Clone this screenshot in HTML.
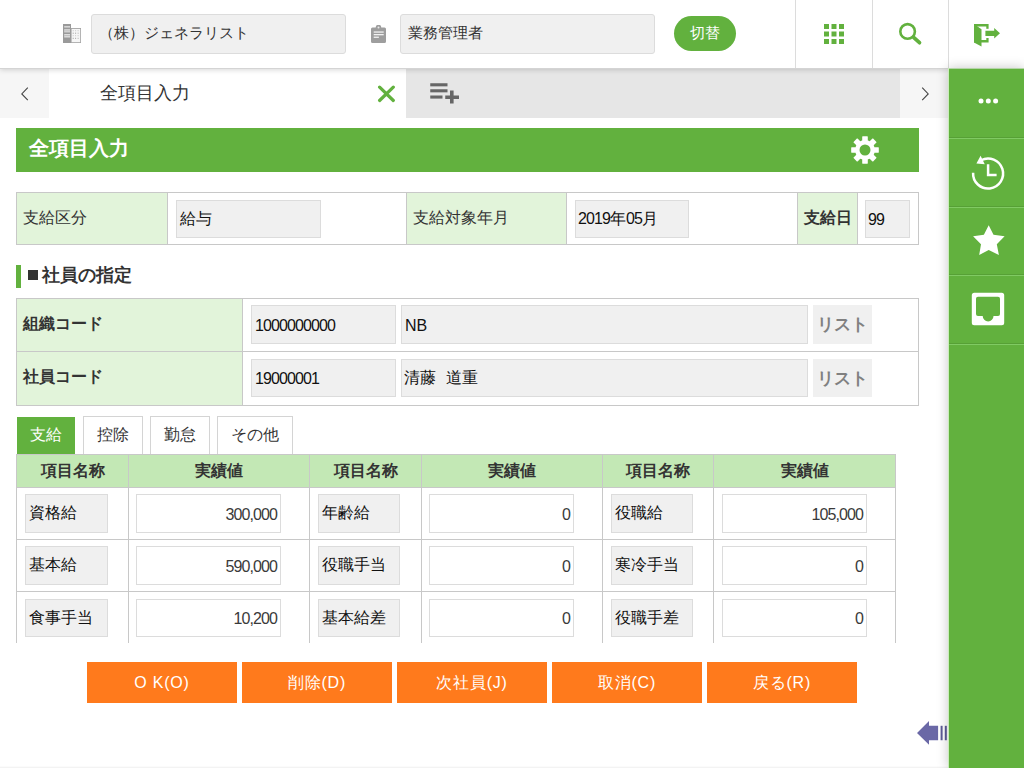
<!DOCTYPE html>
<html lang="ja">
<head>
<meta charset="utf-8">
<title>全項目入力</title>
<style>
*{box-sizing:border-box;margin:0;padding:0}
html,body{width:1024px;height:768px;overflow:hidden;background:#fff}
body{font-family:"Liberation Sans",sans-serif;color:#333;position:relative;font-size:15px}
.abs{position:absolute}
#hdr{position:absolute;left:0;top:0;width:1024px;height:69px;background:#fff;border-bottom:1px solid #d4d4d4;box-shadow:0 1px 5px rgba(0,0,0,.16);z-index:5}
.hin{position:absolute;top:14px;height:40px;border:1px solid #dcdcdc;border-radius:3px;background:#f0f0f0;font-size:15px;line-height:36px;padding-left:8px;color:#333;white-space:nowrap;overflow:hidden}
.vsep{position:absolute;top:0;width:1px;height:68px;background:#dcdcdc}
#pill{position:absolute;left:674px;top:16px;width:62px;height:35px;border-radius:17.5px;background:#62b13e;color:#fff;font-size:15px;line-height:34px;text-align:center}
#tabbar{position:absolute;left:0;top:68px;width:948px;height:50px;background:#e6e6e6}
#tabbar .la{position:absolute;left:0;top:0;width:49px;height:50px;background:#f6f6f6}
#tabbar .ra{position:absolute;left:900px;top:0;width:48px;height:50px;background:#f6f6f6}
#tabbar .act{position:absolute;left:49px;top:0;width:357px;height:50px;background:#fff;font-size:17.8px;line-height:51px;padding-left:51px;color:#333}
#side{position:absolute;left:948px;top:68px;width:76px;height:700px;background:#62b13e;border-left:1px solid #c9edba;box-shadow:0 0 11px rgba(0,0,0,.22);z-index:6}
#side::before{content:"";position:absolute;left:0;top:0;width:76px;height:1px;background:#b4d5a7}
#side .sd{position:absolute;left:0;width:76px;height:1px;background:#57a036}
#side .sl{position:absolute;left:0;width:76px;height:1px;background:#80ca63}
#ttl{position:absolute;left:16px;top:128px;width:903px;height:44px;background:#62b13e;color:#fff;font-weight:bold;font-size:20px;line-height:41px;padding-left:13px}
.box{position:absolute;border:1px solid #c8c8c8;background:#fff}
.lab{position:absolute;background:#e2f4da}
.vl{position:absolute;width:1px;background:#c8c8c8}
.hl{position:absolute;height:1px;background:#c8c8c8}
.ro{position:absolute;border:1px solid #dcdcdc;background:#f0f0f0;white-space:nowrap;overflow:hidden;color:#111;font-size:16px}
.wi{position:absolute;border:1px solid #dcdcdc;background:#fff;white-space:nowrap;overflow:hidden;text-align:right;color:#3a3a3a;font-size:16px}
.n{letter-spacing:-.9px}
.t{position:absolute;white-space:nowrap}
.b{font-weight:bold}
.btn{position:absolute;top:662px;width:150px;height:41px;background:#ff7a1c;color:#fff;font-size:16px;line-height:41px;text-align:center;letter-spacing:.8px}
.tab{position:absolute;top:416px;height:39px;border:1px solid #d4d4d4;border-bottom:none;background:#fff;font-size:16px;line-height:36px;text-align:center;color:#333}
.th{position:absolute;background:#c3e8b5;font-weight:bold;font-size:16px;line-height:32px;text-align:center;color:#333}
</style>
</head>
<body>
<div id="hdr">
  <svg class="abs" style="left:63px;top:24px" width="18" height="19" viewBox="0 0 18 19">
    <rect x="0" y="0" width="8" height="19" fill="#9a9a9a"/>
    <rect x="1.200" y="2" width="5.800" height="1.600" fill="#d6d6d6"/>
    <rect x="1.200" y="5.200" width="5.800" height="3.200" fill="#dedede"/><rect x="1.200" y="6.500" width="5.800" height=".8" fill="#b4b4b4"/>
    <rect x="1.200" y="10" width="5.800" height="3.500" fill="#dedede"/><rect x="1.200" y="11.300" width="5.800" height=".8" fill="#b4b4b4"/>
    <rect x="8" y="4" width="10" height="15" fill="#a4a4a4"/>
    <rect x="8.600" y="4.900" width="8.600" height="13.300" fill="#f6f6f6"/>
    <g fill="#9c9c9c">
      <rect x="9.700" y="6.200" width="1" height="1" opacity=".5"/><rect x="12.100" y="6.200" width="1" height="1" opacity=".5"/><rect x="14.500" y="6.200" width="1.300" height="1" opacity=".4"/>
      <rect x="9.700" y="8.700" width="1" height="1"/><rect x="12.100" y="8.700" width="1" height="1"/><rect x="14.500" y="8.700" width="1.300" height="1" opacity=".6"/>
      <rect x="9.700" y="11.200" width="1" height="1" opacity=".5"/><rect x="12.100" y="11.200" width="1" height="1" opacity=".5"/><rect x="14.500" y="11.200" width="1.300" height="1" opacity=".4"/>
      <rect x="9.700" y="13.800" width="1" height="1"/><rect x="12.100" y="13.800" width="1" height="1"/><rect x="14.500" y="13.800" width="1.300" height="1" opacity=".6"/>
    </g>
  </svg>
  <div class="hin" style="left:91px;width:255px;padding-left:7px">（株）ジェネラリスト</div>
  <svg class="abs" style="left:371px;top:25px" width="15" height="18" viewBox="0 0 15 18">
    <path d="M1.500 2.500h3.200a2.800 2.800 0 0 1 5.600 0h3.200a1.500 1.500 0 0 1 1.500 1.500v12.500a1.500 1.500 0 0 1-1.500 1.500h-12a1.500 1.500 0 0 1-1.500-1.500v-12.500a1.500 1.500 0 0 1 1.500-1.500z" fill="#9e9e9e"/>
    <circle cx="7.500" cy="2.600" r="1" fill="#e8e8e8"/>
    <rect x="2.700" y="6.400" width="10" height="1.300" fill="#f2f2f2"/><rect x="2.700" y="9" width="10" height="1.300" fill="#f2f2f2"/><rect x="2.700" y="11.600" width="5.200" height="1.300" fill="#f2f2f2"/>
  </svg>
  <div class="hin" style="left:400px;width:255px;padding-left:7px">業務管理者</div>
  <div id="pill">切替</div>
  <div class="vsep" style="left:795px"></div>
  <div class="vsep" style="left:872px"></div>
  <div class="vsep" style="left:948px"></div>
  <svg class="abs" style="left:824px;top:24px" width="20" height="20" viewBox="0 0 20 20" fill="#62b13e">
    <rect x="0" y="0" width="5" height="5"/><rect x="7.500" y="0" width="5" height="5"/><rect x="15" y="0" width="5" height="5"/>
    <rect x="0" y="7.500" width="5" height="5"/><rect x="7.500" y="7.500" width="5" height="5"/><rect x="15" y="7.500" width="5" height="5"/>
    <rect x="0" y="15" width="5" height="5"/><rect x="7.500" y="15" width="5" height="5"/><rect x="15" y="15" width="5" height="5"/>
  </svg>
  <svg class="abs" style="left:898px;top:21px" width="26" height="26" viewBox="0 0 26 26">
    <circle cx="9.600" cy="10.400" r="7.300" fill="none" stroke="#62b13e" stroke-width="2.600"/>
    <path d="M15.600 16.300L21.500 21.700" stroke="#62b13e" stroke-width="3.700" stroke-linecap="round"/>
  </svg>
  <svg class="abs" style="left:973px;top:22px" width="30" height="28" viewBox="0 0 30 28" fill="#62b13e">
    <path d="M1 2h14.600v18.600h-14.600zM3 4.600v13.400h10.300v-13.400z" fill-rule="evenodd"/>
    <rect x="12.600" y="6.800" width="4" height="9.200" fill="#fff"/>
    <path d="M1 2L8.500 7.300V24.500L1 20.500z"/>
    <path d="M12.400 8.700H21.200V6.100L27 11.300L21.200 16.600V14H12.400z"/>
  </svg>
</div>
<div id="tabbar">
  <div class="la"></div>
  <div class="act">全項目入力</div>
  <div class="ra"></div>
  <svg class="abs" style="left:20px;top:17.600px" width="10" height="16" viewBox="0 0 10 16"><path d="M7.800 1.700L1.800 7.900l6 6.200" fill="none" stroke="#444" stroke-width="1.100"/></svg>
  <svg class="abs" style="left:920px;top:17.600px" width="10" height="16" viewBox="0 0 10 16"><path d="M2.200 1.700L8.200 7.900l-6 6.200" fill="none" stroke="#444" stroke-width="1.100"/></svg>
  <svg class="abs" style="left:377px;top:17px" width="19" height="19" viewBox="0 0 19 19"><path d="M2.600 2.200L16.300 15.500M16.300 2.200L2.600 15.500" stroke="#62b13e" stroke-width="3.200" stroke-linecap="round"/></svg>
  <svg class="abs" style="left:430px;top:15px" width="30" height="22" viewBox="0 0 30 22" fill="#666">
    <rect x=".25" y=".25" width="17.250" height="3.100"/><rect x=".25" y="6.250" width="17.250" height="3.100"/><rect x=".25" y="12.500" width="12.250" height="3.100"/>
    <rect x="20" y="7.500" width="3.600" height="13"/><rect x="15.250" y="12.500" width="13.750" height="3.500"/>
  </svg>
</div>
<div id="side">
  <svg class="abs" style="left:28px;top:29px" width="22" height="8" viewBox="0 0 22 8" fill="#fff"><circle cx="4" cy="4" r="2.500"/><circle cx="11.300" cy="4" r="2.500"/><circle cx="18.600" cy="4" r="2.500"/></svg>
  <div class="sd" style="top:69px"></div><div class="sl" style="top:70px"></div>
  <svg class="abs" style="left:7px;top:72px" width="64" height="64" viewBox="0 0 64 64">
    <path d="M25.060 20.260A15 15 0 1 1 17.100 32.700" fill="none" stroke="#fff" stroke-width="2.500"/>
    <path d="M20.400 23.500L24.600 15.700L28.750 24.200z" fill="#fff"/>
    <path d="M32.100 24.200V35H40.600" fill="none" stroke="#fff" stroke-width="2.500"/>
  </svg>
  <div class="sd" style="top:138px"></div><div class="sl" style="top:139px"></div>
  <svg class="abs" style="left:7px;top:140px" width="64" height="64" viewBox="0 0 64 64">
    <path d="M32.700 17.300L37.500 26.800L48.600 28.300L40.800 36.250L42.900 47.100L32.700 42.100L23.200 47.100L25 36.250L17.100 28.300L27.900 26.800z" fill="#fff"/>
  </svg>
  <div class="sd" style="top:206px"></div><div class="sl" style="top:207px"></div>
  <svg class="abs" style="left:7px;top:208px" width="64" height="64" viewBox="0 0 64 64">
    <path d="M18.300 16.700h27.400a2.500 2.500 0 0 1 2.500 2.500v27.500a2.500 2.500 0 0 1-2.500 2.500h-27.400a2.500 2.500 0 0 1-2.500-2.500v-27.500a2.500 2.500 0 0 1 2.500-2.500zM22 20.800a2 2 0 0 0-2 2v15.200a2 2 0 0 0 2 2h4.700a5.400 5.400 0 0 0 10.800 0h4.500a2 2 0 0 0 2-2v-15.200a2 2 0 0 0-2-2z" fill="#fff" fill-rule="evenodd"/>
  </svg>
  <div class="sd" style="top:275px"></div><div class="sl" style="top:276px"></div>
</div>
<div id="ttl">全項目入力</div>
<svg class="abs" style="left:851px;top:136px" width="28" height="28" viewBox="-15 -15 30 30">
  <g fill="#fff">
    <rect x="-3" y="-14.800" width="6" height="29.600" rx=".5"/><rect x="-3" y="-14.800" width="6" height="29.600" rx=".5" transform="rotate(45)"/><rect x="-3" y="-14.800" width="6" height="29.600" rx=".5" transform="rotate(90)"/><rect x="-3" y="-14.800" width="6" height="29.600" rx=".5" transform="rotate(135)"/>
    <circle r="10.600"/>
  </g>
  <circle r="5.900" fill="#62b13e"/>
</svg>

<div class="box" style="left:16px;top:192px;width:903px;height:53px"></div>
<div class="lab" style="left:17px;top:193px;width:150px;height:51px"></div>
<div class="lab" style="left:407px;top:193px;width:159px;height:51px"></div>
<div class="lab" style="left:798px;top:193px;width:59px;height:51px"></div>
<div class="vl" style="left:167px;top:193px;height:51px"></div>
<div class="vl" style="left:406px;top:193px;height:51px"></div>
<div class="vl" style="left:566px;top:193px;height:51px"></div>
<div class="vl" style="left:797px;top:193px;height:51px"></div>
<div class="vl" style="left:857px;top:193px;height:51px"></div>
<div class="t" style="left:23px;top:208px;font-size:16px;line-height:20px">支給区分</div>
<div class="t" style="left:413px;top:208px;font-size:16px;line-height:20px">支給対象年月</div>
<div class="t b" style="left:804px;top:208px;font-size:16px;line-height:20px">支給日</div>
<div class="ro" style="left:176px;top:200px;width:145px;height:38px;line-height:35px;padding-left:3px">給与</div>
<div class="ro" style="left:575px;top:200px;width:114px;height:38px;line-height:36px;padding-left:2px"><span class="n">2019</span>年<span class="n">05</span>月</div>
<div class="ro" style="left:865px;top:200px;width:45px;height:38px;line-height:37px;padding-left:2px"><span class="n">99</span></div>

<div class="abs" style="left:16px;top:265px;width:5px;height:23px;background:#62b13e"></div>
<div class="abs" style="left:28px;top:270px;width:10px;height:10px;background:#333"></div>
<div class="t b" style="left:42px;top:264px;font-size:17.500px;line-height:22px;color:#333">社員の指定</div>

<div class="box" style="left:16px;top:298px;width:903px;height:108px"></div>
<div class="lab" style="left:17px;top:299px;width:225px;height:106px"></div>
<div class="vl" style="left:242px;top:299px;height:106px"></div>
<div class="hl" style="left:17px;top:351px;width:901px"></div>
<div class="t b" style="left:23px;top:314px;font-size:16px;line-height:20px">組織コード</div>
<div class="t b" style="left:23px;top:367px;font-size:16px;line-height:20px">社員コード</div>
<div class="ro" style="left:251px;top:305px;width:145px;height:39px;line-height:39px;padding-left:3px"><span class="n">1000000000</span></div>
<div class="ro" style="left:401px;top:305px;width:407px;height:39px;line-height:39px;padding-left:3px">NB</div>
<div class="ro" style="left:251px;top:359px;width:145px;height:38px;line-height:38px;padding-left:3px"><span class="n">19000001</span></div>
<div class="ro" style="left:401px;top:359px;width:407px;height:38px;line-height:35px;padding-left:2px">清藤<span style="display:inline-block;width:10px"></span>道重</div>
<div class="abs b" style="left:813px;top:305px;width:59px;height:39px;background:#f0f0f0;color:#808080;font-size:16.500px;line-height:38px;text-align:center">リスト</div>
<div class="abs b" style="left:813px;top:359px;width:59px;height:38px;background:#f0f0f0;color:#808080;font-size:16.500px;line-height:38px;text-align:center">リスト</div>

<div class="tab" style="left:17px;top:416.500px;height:38.500px;width:58px;background:#62b13e;border-color:#62b13e;color:#fff;line-height:34px">支給</div>
<div class="tab" style="left:83px;width:60px">控除</div>
<div class="tab" style="left:150px;width:60px">勤怠</div>
<div class="tab" style="left:217px;width:76px">その他</div>

<div class="abs" style="left:16px;top:454px;width:880px;height:189px;background:#c8c8c8"></div>
<div class="th" style="left:17px;top:455px;width:111px;height:32px">項目名称</div>
<div class="th" style="left:129px;top:455px;width:180px;height:32px">実績値</div>
<div class="th" style="left:310px;top:455px;width:111px;height:32px">項目名称</div>
<div class="th" style="left:422px;top:455px;width:180px;height:32px">実績値</div>
<div class="th" style="left:603px;top:455px;width:110px;height:32px">項目名称</div>
<div class="th" style="left:714px;top:455px;width:181px;height:32px">実績値</div>
<div class="abs" style="left:17px;top:488px;width:111px;height:51px;background:#fff"></div>
<div class="ro" style="left:25px;top:494px;width:83px;height:39px;line-height:36px;padding-left:3px">資格給</div>
<div class="abs" style="left:129px;top:488px;width:180px;height:51px;background:#fff"></div>
<div class="wi" style="left:136px;top:494px;width:145px;height:39px;line-height:39px;padding-right:3px"><span class="n">300,000</span></div>
<div class="abs" style="left:310px;top:488px;width:111px;height:51px;background:#fff"></div>
<div class="ro" style="left:318px;top:494px;width:82px;height:39px;line-height:36px;padding-left:3px">年齢給</div>
<div class="abs" style="left:422px;top:488px;width:180px;height:51px;background:#fff"></div>
<div class="wi" style="left:429px;top:494px;width:145px;height:39px;line-height:39px;padding-right:3px"><span class="n">0</span></div>
<div class="abs" style="left:603px;top:488px;width:110px;height:51px;background:#fff"></div>
<div class="ro" style="left:611px;top:494px;width:82px;height:39px;line-height:36px;padding-left:3px">役職給</div>
<div class="abs" style="left:714px;top:488px;width:181px;height:51px;background:#fff"></div>
<div class="wi" style="left:722px;top:494px;width:145px;height:39px;line-height:39px;padding-right:3px"><span class="n">105,000</span></div>
<div class="abs" style="left:17px;top:540px;width:111px;height:51px;background:#fff"></div>
<div class="ro" style="left:25px;top:546px;width:83px;height:39px;line-height:36px;padding-left:3px">基本給</div>
<div class="abs" style="left:129px;top:540px;width:180px;height:51px;background:#fff"></div>
<div class="wi" style="left:136px;top:546px;width:145px;height:39px;line-height:39px;padding-right:3px"><span class="n">590,000</span></div>
<div class="abs" style="left:310px;top:540px;width:111px;height:51px;background:#fff"></div>
<div class="ro" style="left:318px;top:546px;width:82px;height:39px;line-height:36px;padding-left:3px">役職手当</div>
<div class="abs" style="left:422px;top:540px;width:180px;height:51px;background:#fff"></div>
<div class="wi" style="left:429px;top:546px;width:145px;height:39px;line-height:39px;padding-right:3px"><span class="n">0</span></div>
<div class="abs" style="left:603px;top:540px;width:110px;height:51px;background:#fff"></div>
<div class="ro" style="left:611px;top:546px;width:82px;height:39px;line-height:36px;padding-left:3px">寒冷手当</div>
<div class="abs" style="left:714px;top:540px;width:181px;height:51px;background:#fff"></div>
<div class="wi" style="left:722px;top:546px;width:145px;height:39px;line-height:39px;padding-right:3px"><span class="n">0</span></div>
<div class="abs" style="left:17px;top:592px;width:111px;height:51px;background:#fff"></div>
<div class="ro" style="left:25px;top:599px;width:83px;height:38px;line-height:35px;padding-left:3px">食事手当</div>
<div class="abs" style="left:129px;top:592px;width:180px;height:51px;background:#fff"></div>
<div class="wi" style="left:136px;top:599px;width:145px;height:38px;line-height:38px;padding-right:3px"><span class="n">10,200</span></div>
<div class="abs" style="left:310px;top:592px;width:111px;height:51px;background:#fff"></div>
<div class="ro" style="left:318px;top:599px;width:82px;height:38px;line-height:35px;padding-left:3px">基本給差</div>
<div class="abs" style="left:422px;top:592px;width:180px;height:51px;background:#fff"></div>
<div class="wi" style="left:429px;top:599px;width:145px;height:38px;line-height:38px;padding-right:3px"><span class="n">0</span></div>
<div class="abs" style="left:603px;top:592px;width:110px;height:51px;background:#fff"></div>
<div class="ro" style="left:611px;top:599px;width:82px;height:38px;line-height:35px;padding-left:3px">役職手差</div>
<div class="abs" style="left:714px;top:592px;width:181px;height:51px;background:#fff"></div>
<div class="wi" style="left:722px;top:599px;width:145px;height:38px;line-height:38px;padding-right:3px"><span class="n">0</span></div>
<div class="btn" style="left:87px">O K(O)</div>
<div class="btn" style="left:242px">削除(D)</div>
<div class="btn" style="left:397px">次社員(J)</div>
<div class="btn" style="left:552px">取消(C)</div>
<div class="btn" style="left:707px">戻る(R)</div>

<svg class="abs" style="left:917px;top:720px" width="31" height="27" viewBox="0 0 31 27">
  <path d="M0 13L12 1.100V5.800H21.100V20.250H12V24.800z" fill="#6a68a6"/>
  <rect x="23.600" y="5.800" width="2" height="14.450" fill="#5d5b97"/><rect x="27.800" y="5.800" width="2" height="14.450" fill="#5d5b97"/>
</svg>
<div class="abs" style="left:0;top:766px;width:948px;height:1px;background:#fbfbfb"></div><div class="abs" style="left:0;top:767px;width:948px;height:1px;background:#f3f3f3"></div>

</body>
</html>
